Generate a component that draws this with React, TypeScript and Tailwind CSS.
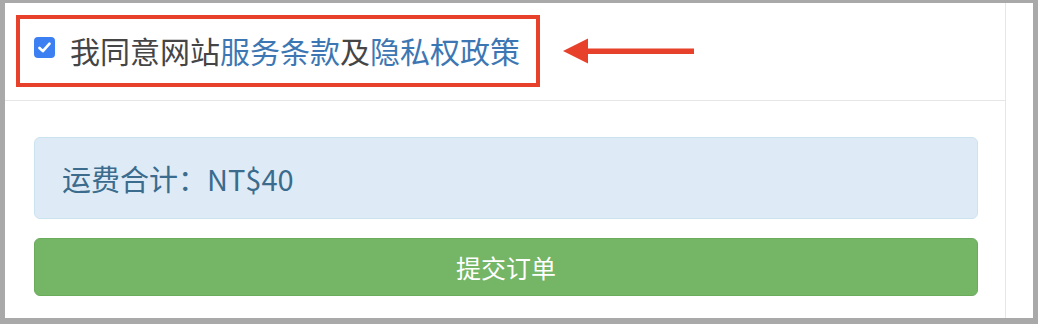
import React from "react";

const font = { fontFamily: '"Noto Sans CJK SC", "Noto Sans", sans-serif' };

export default function App() {
  return (
    <div
      className="w-[1038px] h-[324px] bg-[#a9a9a9] pt-[3px] pl-[5px] pr-[5px] pb-[6px]"
      style={font}
    >
      <div className="w-full h-full bg-white flex">
        <div className="w-[1001px] h-full border-r border-[#e6e6e6] flex flex-col">
          <div className="h-[98px] border-b border-[#e6e6e6] flex items-start pt-[12px] pl-[11px]">
            <div className="w-[524px] h-[72px] border-[4px] border-[#e8412b] flex items-center pl-[14px]">
              <span className="w-[21px] h-[21px] rounded-[4px] bg-[#3b7ff3] flex items-center justify-center mt-[-8px]">
                <svg width="15" height="15" viewBox="0 0 14 14">
                  <path
                    d="M2.3 7.4 L5.5 10.4 L11.7 3.4"
                    fill="none"
                    stroke="#fff"
                    strokeWidth="2.5"
                    strokeLinecap="round"
                    strokeLinejoin="round"
                  />
                </svg>
              </span>
              <span className="ml-[15px] text-[30px] leading-none text-[#454545] whitespace-nowrap mt-[-2px]">
                我同意网站<span className="text-[#3d77b3]">服务条款</span>及
                <span className="text-[#3d77b3]">隐私权政策</span>
              </span>
            </div>
            <svg
              className="ml-[23px] mt-[23px]"
              width="133"
              height="26"
              viewBox="0 0 133 26"
            >
              <path d="M0 13 L25 0.5 L25 25.5 Z" fill="#e8412b" />
              <rect x="24" y="10.5" width="107" height="5.5" fill="#e8412b" />
            </svg>
          </div>
          <div className="pl-[29px] pr-[27px] pt-[36px]">
            <div className="h-[82px] rounded-[6px] bg-[#deebf6] border border-[#cbe3ef] flex items-center pl-[27px]">
              <span className="text-[29px] leading-none text-[#3b6b8d]">
                运费合计：NT$40
              </span>
            </div>
            <button className="mt-[19px] w-full h-[58px] rounded-[6px] bg-[#74b566] border border-[#6aab5c] flex items-center justify-center">
              <span className="text-[25px] leading-none text-white">提交订单</span>
            </button>
          </div>
        </div>
      </div>
    </div>
  );
}
